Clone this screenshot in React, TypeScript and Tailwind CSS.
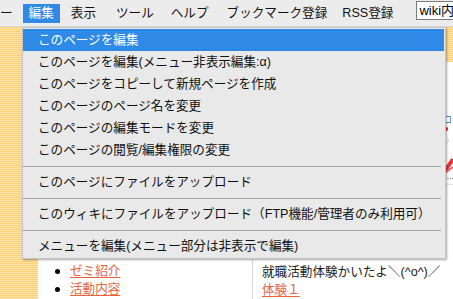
import React from "react";

const stripes =
  "bg-[repeating-linear-gradient(to_bottom,#fcd17a_0px,#fcd17a_1px,#fee4a8_1px,#fee4a8_2px)]";

function MenuItem({ children, active }: { children: React.ReactNode; active?: boolean }) {
  return (
    <div
      className={
        "h-[22px] flex items-center pl-[15px] whitespace-nowrap " +
        (active ? "bg-[#2e8ae6] text-white" : "text-[#111]")
      }
    >
      {children}
    </div>
  );
}

function Sep() {
  return (
    <div className="h-[10px] flex items-center pr-[3px]">
      <div className="h-px w-full bg-[#a3a3a3]" />
    </div>
  );
}

export default function App() {
  return (
    <div
      className="relative w-[453px] h-[299px] overflow-hidden bg-white text-[12.6px] leading-none"
      style={{ fontFamily: '"Liberation Sans", "Noto Sans CJK JP", sans-serif' }}
    >
      {/* top menu bar */}
      <div className="h-[27px] bg-[#ececec] border-b border-[#dadada] flex items-center whitespace-nowrap text-[#111]">
        <span className="ml-0 mr-[10px]">ー</span>
        <span className="h-[19px] px-[6px] flex items-center bg-[#2e8ae6] text-white">編集</span>
        <span className="ml-[5px] px-[6px]">表示</span>
        <span className="ml-[8px] px-[6px]">ツール</span>
        <span className="ml-[5px] px-[6px]">ヘルプ</span>
        <span className="ml-[6px] px-[6px]">ブックマーク登録</span>
        <span className="ml-[3px] px-[6px]">RSS登録</span>
        <div className="ml-[17px] mb-[5px] h-[19px] w-[60px] shrink-0 bg-white border border-[#7a7a7a] flex items-center pl-[2px] text-black text-[13px]">
          wiki内
        </div>
      </div>

      {/* body */}
      <div className="flex h-[272px]">
        <div className={"w-[38px] shrink-0 " + stripes} />
        <div className="w-[214px] shrink-0 pt-[235px] pl-[17px]">
          <ul className="flex flex-col">
            <li className="h-[18px] flex items-center">
              <span className="w-[5px] h-[5px] rounded-full bg-black mr-[10px]" />
              <span className="text-[#e6643c] underline underline-offset-2">ゼミ紹介</span>
            </li>
            <li className="h-[18px] flex items-center">
              <span className="w-[5px] h-[5px] rounded-full bg-black mr-[10px]" />
              <span className="text-[#e6643c] underline underline-offset-2">活動内容</span>
            </li>
          </ul>
        </div>
        <div className="flex-1 border-l border-[#d4d4d4] flex flex-col">
          <div className={"h-[35px] " + stripes} />
          <div className="h-[53px]" />
          <div className="h-[10px] flex justify-end items-center text-[#2d6fd0] text-[9px] pr-[1px]">ロ</div>
          <div className="h-[8px] flex justify-end items-center pr-[5px]">
            <div className="w-[4px] h-[4px] rounded-full bg-[#e02020]" />
          </div>
          <div className="h-[14px] flex justify-end items-center pr-[4px]">
            <div className="w-[5px] h-[5px] rounded-full border border-[#dddddd]" />
          </div>
          <div className="h-[26px] flex justify-end items-end">
            <svg width="8" height="22" viewBox="0 0 8 22">
              <path d="M0 20 L8 8" stroke="#e8343a" strokeWidth="4" />
              <path d="M0 22 L8 16" stroke="#f06a6a" strokeWidth="2" />
            </svg>
          </div>
          <div className="h-[10px] flex justify-end items-center">
            <div className="w-[6px] border-t border-dotted border-[#aaaaaa]" />
          </div>
          <div className="h-[2px] border-b border-[#e2e2e2]" />
          <div className="flex-1 flex flex-col justify-end pl-[9px] text-[#222]">
            <div className="h-[18px] flex items-center">就職活動体験かいたよ＼(^o^)／</div>
            <div className="h-[18px] flex items-center">
              <span className="text-[#e6643c] underline underline-offset-2">体験１</span>
            </div>
          </div>
        </div>
      </div>

      {/* dropdown */}
      <div className="absolute left-[22px] top-[27px] w-[424px] bg-[#e9e9e9] border border-[#c6c6c6] shadow-[1px_1px_2px_rgba(0,0,0,0.35)] pt-[1px] pb-[1px] pr-[1px]">
        <MenuItem active>このページを編集</MenuItem>
        <MenuItem>このページを編集(メニュー非表示編集:α)</MenuItem>
        <MenuItem>このページをコピーして新規ページを作成</MenuItem>
        <MenuItem>このページのページ名を変更</MenuItem>
        <MenuItem>このページの編集モードを変更</MenuItem>
        <MenuItem>このページの閲覧/編集権限の変更</MenuItem>
        <Sep />
        <MenuItem>このページにファイルをアップロード</MenuItem>
        <Sep />
        <MenuItem>このウィキにファイルをアップロード（FTP機能/管理者のみ利用可）</MenuItem>
        <Sep />
        <MenuItem>メニューを編集(メニュー部分は非表示で編集)</MenuItem>
      </div>
    </div>
  );
}
